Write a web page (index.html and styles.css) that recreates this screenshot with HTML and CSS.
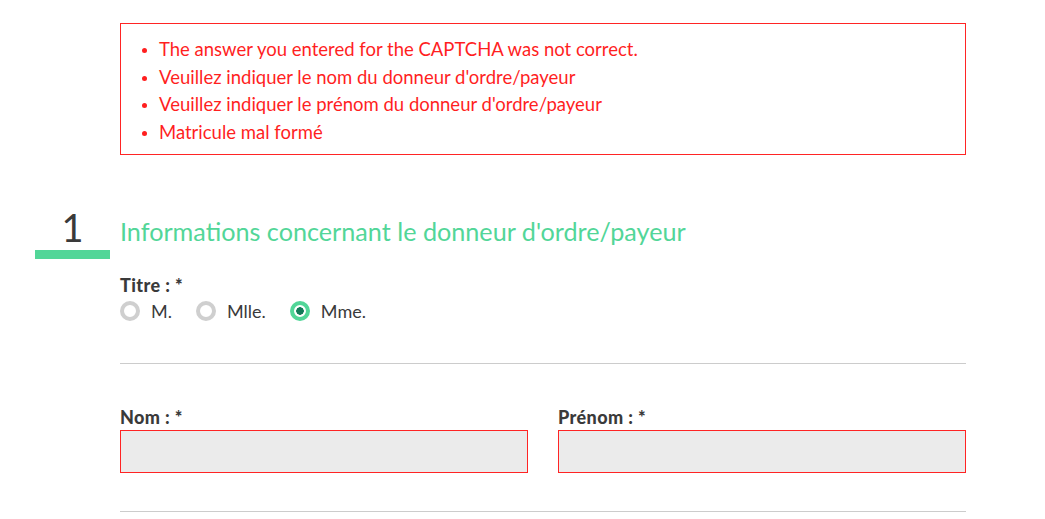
FILE: index.html
```html
<!DOCTYPE html>
<html lang="fr">
<head>
<meta charset="utf-8">
<title>Formulaire</title>
<link rel="stylesheet" href="styles.css">
</head>
<body>
<main class="page">
  <div class="errors">
    <ul>
      <li>The answer you entered for the CAPTCHA was not correct.</li>
      <li>Veuillez indiquer le nom du donneur d'ordre/payeur</li>
      <li>Veuillez indiquer le prénom du donneur d'ordre/payeur</li>
      <li>Matricule mal formé</li>
    </ul>
  </div>

  <section class="section">
    <div class="section-head">
      <div class="step"><span class="step-num">1</span><span class="step-bar"></span></div>
      <h2 class="section-title">Informations concernant le donneur d'ordre/payeur</h2>
    </div>

    <div class="field-titre">
      <div class="label">Titre : *</div>
      <div class="radios">
        <label class="radio"><span class="dot"></span>M.</label>
        <label class="radio"><span class="dot"></span>Mlle.</label>
        <label class="radio checked"><span class="dot"></span>Mme.</label>
      </div>
    </div>

    <hr class="rule">

    <div class="row">
      <div class="field">
        <div class="label">Nom : *</div>
        <div class="input error"></div>
      </div>
      <div class="field">
        <div class="label">Prénom : *</div>
        <div class="input error"></div>
      </div>
    </div>

    <hr class="rule rule-2">
  </section>
</main>
</body>
</html>
```

FILE: styles.css
```css
html, body {
  margin: 0;
  padding: 0;
  background: #fff;
}
body {
  font-family: Lato, "Open Sans", sans-serif;
  color: #3a3a3a;
}
.page {
  margin-left: 120px;
  width: 846px;
  padding-top: 23px;
}
.errors {
  border: 1px solid #ff2424;
  padding: 12px 0 8px 0;
  color: #ff1f1f;
  font-size: 18.5px;
}
.errors ul {
  margin: 0;
  padding-left: 38px;
  line-height: 27.5px;
}
.errors li::marker {
  font-size: 15px;
}
.section {
  margin-top: 50px;
}
.section-head {
  display: flex;
  align-items: flex-start;
  margin-left: -85px;
  gap: 10px;
}
.step {
  width: 75px;
  display: flex;
  flex-direction: column;
  align-items: center;
}
.step-num {
  font-size: 38px;
  line-height: 44px;
  color: #3a3a3a;
  font-weight: 400;
}
.step-bar {
  display: block;
  width: 75px;
  height: 9px;
  background: #52d698;
  margin-top: 1px;
}
.section-title {
  margin: 11px 0 0 0;
  font-size: 25.2px;
  line-height: 30px;
  font-weight: 400;
  color: #52d698;
}
.field-titre {
  margin-top: 16px;
}
.label {
  font-size: 18px;
  font-weight: 900;
  line-height: 20px;
  letter-spacing: 0.4px;
  color: #3a3a3a;
}
.radios {
  display: flex;
  margin-top: 6px;
}
.radio {
  display: flex;
  align-items: center;
  font-size: 18px;
  line-height: 20px;
  color: #3a3a3a;
  margin-right: 24px;
}
.dot {
  box-sizing: border-box;
  width: 20px;
  height: 20px;
  border-radius: 50%;
  border: 4px solid #cfcfcf;
  margin-right: 11px;
  display: inline-block;
}
.radio.checked .dot {
  border-color: #52d698;
  background: radial-gradient(circle, #117a57 0 3.5px, #fff 4px);
}
.rule {
  border: 0;
  border-top: 1px solid #cccccc;
  margin: 42px 0 0 0;
  height: 0;
}
.row {
  display: flex;
  gap: 30px;
  margin-top: 43px;
}
.field {
  flex: 1;
}
.field .label {
  margin-bottom: 3px;
}
.input {
  box-sizing: border-box;
  height: 43px;
  background: #ebebeb;
  border: 1px solid #cfcfcf;
}
.input.error {
  border-color: #ff2424;
}
.rule-2 {
  margin-top: 38px;
}
```
